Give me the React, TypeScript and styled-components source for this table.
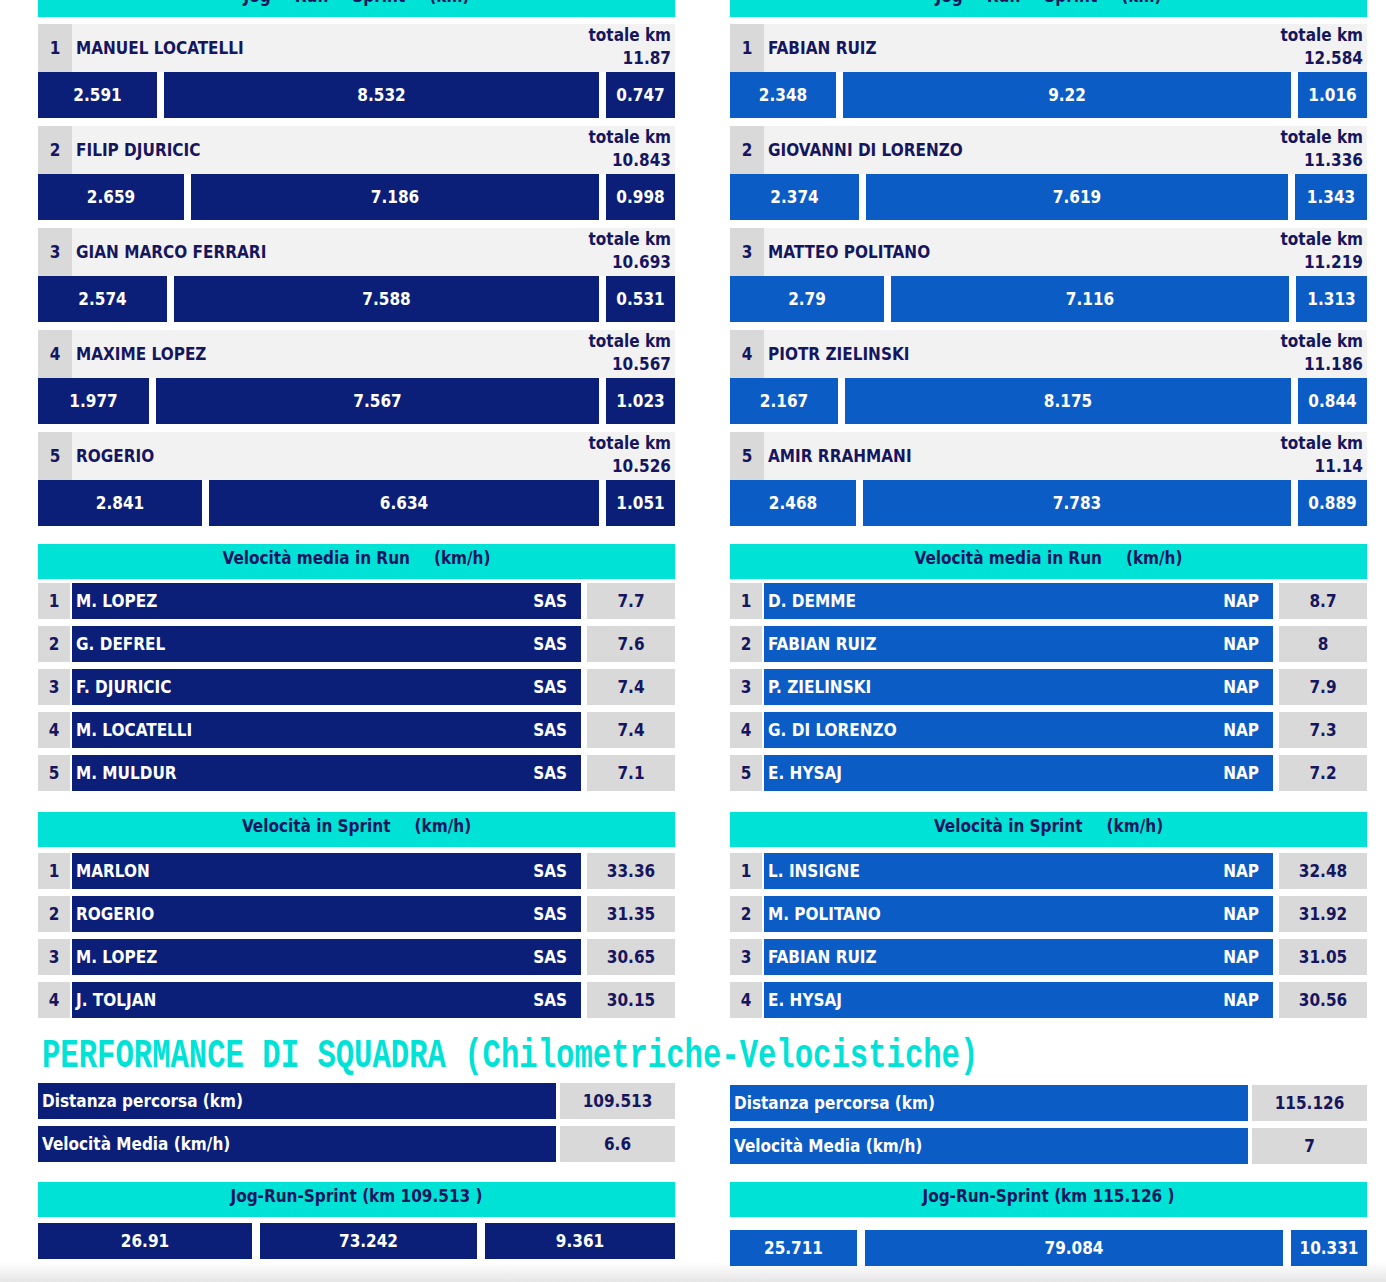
import React from 'react';
import styled, { createGlobalStyle } from 'styled-components';

const GlobalStyle = createGlobalStyle`
  html, body {
    margin: 0;
    padding: 0;
  }
  body {
    width: 1386px;
    height: 1282px;
    overflow: hidden;
    background: linear-gradient(to bottom, #ffffff 0, #ffffff 1262px, #e6e6e6 1282px);
    font-family: 'DejaVu Sans Condensed', 'Liberation Sans Narrow', Roboto, 'Liberation Sans', sans-serif;
    font-weight: 700;
  }
`;

const CYAN = '#00e2d6';
const INK = '#16165e';
const GRAY = '#d9d9d9';
const LIGHT = '#f2f2f2';

type Team = { color: string; code: string };

const Page = styled.div`
  width: 1386px;
  padding-left: 38px;
  box-sizing: border-box;
`;

const Columns = styled.div`
  display: grid;
  grid-template-columns: 637px 637px;
  column-gap: 55px;
  align-items: start;
`;

const Column = styled.div`
  display: flex;
  flex-direction: column;
`;

const Header = styled.div<{ $top?: number }>`
  height: 35px;
  margin-top: ${(p) => p.$top ?? 0}px;
  background: ${CYAN};
  color: ${INK};
  font-size: 17px;
  display: flex;
  justify-content: center;
  gap: 24px;
  padding-top: 3px;
  box-sizing: border-box;
  line-height: 22px;
`;

const PlayerList = styled.div`
  margin-top: 7px;
  display: flex;
  flex-direction: column;
  gap: 8px;
`;

const PlayerBlock = styled.div`
  display: flex;
  flex-direction: column;
`;

const InfoRow = styled.div`
  height: 48px;
  display: flex;
  background: ${LIGHT};
  color: ${INK};
`;

const NumCell = styled.div<{ $w: number }>`
  width: ${(p) => p.$w}px;
  flex: none;
  background: ${GRAY};
  color: ${INK};
  font-size: 17px;
  display: flex;
  align-items: center;
  justify-content: center;
`;

const PlayerName = styled.div`
  flex: 1;
  padding-left: 4px;
  font-size: 17px;
  display: flex;
  align-items: center;
`;

const Total = styled.div`
  text-align: right;
  padding-right: 4px;
  font-size: 17px;
  line-height: 23px;
  padding-top: 0;
`;

const SplitBar = styled.div<{ $h: number; $gap: number }>`
  height: ${(p) => p.$h}px;
  display: flex;
  gap: ${(p) => p.$gap}px;
`;

const Segment = styled.div<{ $color: string }>`
  flex: none;
  background: ${(p) => p.$color};
  color: #ffffff;
  font-size: 17px;
  display: flex;
  align-items: center;
  justify-content: center;
`;

const Section = styled.div<{ $top: number }>`
  margin-top: ${(p) => p.$top}px;
  display: flex;
  flex-direction: column;
`;

const RankList = styled.div<{ $top: number }>`
  margin-top: ${(p) => p.$top}px;
  display: flex;
  flex-direction: column;
  gap: 7px;
`;

const RankRow = styled.div`
  height: 36px;
  display: flex;
`;

const RankName = styled.div<{ $color: string }>`
  flex: 1;
  margin-left: 2px;
  background: ${(p) => p.$color};
  color: #ffffff;
  font-size: 17px;
  display: flex;
  align-items: center;
  justify-content: space-between;
  padding: 0 14px 0 4px;
`;

const ValueCell = styled.div<{ $w: number; $gap: number }>`
  width: ${(p) => p.$w}px;
  margin-left: ${(p) => p.$gap}px;
  flex: none;
  background: ${GRAY};
  color: ${INK};
  font-size: 17px;
  display: flex;
  align-items: center;
  justify-content: center;
`;

const Title = styled.h1`
  margin: 18px 0 0 4px;
  height: 47px;
  font-family: 'Liberation Mono', 'DejaVu Sans Mono', monospace;
  font-weight: 700;
  font-size: 30.6px;
  color: ${CYAN};
  line-height: 30px;
  transform: scaleY(1.35);
  transform-origin: left top;
  white-space: nowrap;
  letter-spacing: 0;
`;

const Summary = styled.div<{ $top: number }>`
  margin-top: ${(p) => p.$top}px;
  display: flex;
  flex-direction: column;
`;

const SummaryRows = styled.div`
  display: flex;
  flex-direction: column;
  gap: 7px;
`;

const SummaryRow = styled.div`
  height: 36px;
  display: flex;
`;

const SummaryLabel = styled.div<{ $color: string }>`
  flex: 1;
  background: ${(p) => p.$color};
  color: #ffffff;
  font-size: 17px;
  display: flex;
  align-items: center;
  padding-left: 4px;
`;

type Player = { name: string; total: string; jog: string; run: string; sprint: string; w1: number; w3: number };
type Rank = { name: string; value: string };

const napoli: Team = { color: '#0c5cc6', code: 'NAP' };
const sassuolo: Team = { color: '#0b1f78', code: 'SAS' };

const sasPlayers: Player[] = [
  { name: 'MANUEL LOCATELLI', total: '11.87', jog: '2.591', run: '8.532', sprint: '0.747', w1: 119, w3: 69 },
  { name: 'FILIP DJURICIC', total: '10.843', jog: '2.659', run: '7.186', sprint: '0.998', w1: 146, w3: 69 },
  { name: 'GIAN MARCO FERRARI', total: '10.693', jog: '2.574', run: '7.588', sprint: '0.531', w1: 129, w3: 69 },
  { name: 'MAXIME LOPEZ', total: '10.567', jog: '1.977', run: '7.567', sprint: '1.023', w1: 111, w3: 69 },
  { name: 'ROGERIO', total: '10.526', jog: '2.841', run: '6.634', sprint: '1.051', w1: 164, w3: 69 },
];

const napPlayers: Player[] = [
  { name: 'FABIAN RUIZ', total: '12.584', jog: '2.348', run: '9.22', sprint: '1.016', w1: 106, w3: 69 },
  { name: 'GIOVANNI DI LORENZO', total: '11.336', jog: '2.374', run: '7.619', sprint: '1.343', w1: 129, w3: 72 },
  { name: 'MATTEO POLITANO', total: '11.219', jog: '2.79', run: '7.116', sprint: '1.313', w1: 154, w3: 71 },
  { name: 'PIOTR ZIELINSKI', total: '11.186', jog: '2.167', run: '8.175', sprint: '0.844', w1: 108, w3: 69 },
  { name: 'AMIR RRAHMANI', total: '11.14', jog: '2.468', run: '7.783', sprint: '0.889', w1: 126, w3: 69 },
];

const sasRun: Rank[] = [
  { name: 'M. LOPEZ', value: '7.7' },
  { name: 'G. DEFREL', value: '7.6' },
  { name: 'F. DJURICIC', value: '7.4' },
  { name: 'M. LOCATELLI', value: '7.4' },
  { name: 'M. MULDUR', value: '7.1' },
];

const napRun: Rank[] = [
  { name: 'D. DEMME', value: '8.7' },
  { name: 'FABIAN RUIZ', value: '8' },
  { name: 'P. ZIELINSKI', value: '7.9' },
  { name: 'G. DI LORENZO', value: '7.3' },
  { name: 'E. HYSAJ', value: '7.2' },
];

const sasSprint: Rank[] = [
  { name: 'MARLON', value: '33.36' },
  { name: 'ROGERIO', value: '31.35' },
  { name: 'M. LOPEZ', value: '30.65' },
  { name: 'J. TOLJAN', value: '30.15' },
];

const napSprint: Rank[] = [
  { name: 'L. INSIGNE', value: '32.48' },
  { name: 'M. POLITANO', value: '31.92' },
  { name: 'FABIAN RUIZ', value: '31.05' },
  { name: 'E. HYSAJ', value: '30.56' },
];

const RankTable: React.FC<{ team: Team; rows: Rank[]; top: number }> = ({ team, rows, top }) => (
  <RankList $top={top}>
    {rows.map((r, i) => (
      <RankRow key={r.name + i}>
        <NumCell $w={32}>{i + 1}</NumCell>
        <RankName $color={team.color}>
          <span>{r.name}</span>
          <span>{team.code}</span>
        </RankName>
        <ValueCell $w={88} $gap={6}>{r.value}</ValueCell>
      </RankRow>
    ))}
  </RankList>
);

const TeamColumn: React.FC<{ team: Team; players: Player[]; run: Rank[]; sprint: Rank[] }> = ({
  team,
  players,
  run,
  sprint,
}) => (
  <Column>
    <Header $top={-18}>
      <span>Jog</span>
      <span>Run</span>
      <span>Sprint</span>
      <span>(km)</span>
    </Header>
    <PlayerList>
      {players.map((p, i) => (
        <PlayerBlock key={p.name}>
          <InfoRow>
            <NumCell $w={34}>{i + 1}</NumCell>
            <PlayerName>{p.name}</PlayerName>
            <Total>
              totale km
              <br />
              {p.total}
            </Total>
          </InfoRow>
          <SplitBar $h={46} $gap={7}>
            <Segment $color={team.color} style={{ width: p.w1 }}>{p.jog}</Segment>
            <Segment $color={team.color} style={{ flex: 1 }}>{p.run}</Segment>
            <Segment $color={team.color} style={{ width: p.w3 }}>{p.sprint}</Segment>
          </SplitBar>
        </PlayerBlock>
      ))}
    </PlayerList>
    <Section $top={18}>
      <Header>
        <span>Velocità media in Run</span>
        <span>(km/h)</span>
      </Header>
      <RankTable team={team} rows={run} top={4} />
    </Section>
    <Section $top={21}>
      <Header>
        <span>Velocità in Sprint</span>
        <span>(km/h)</span>
      </Header>
      <RankTable team={team} rows={sprint} top={6} />
    </Section>
  </Column>
);

type Totals = { dist: string; speed: string; parts: [string, number][] };

const TeamSummary: React.FC<{ team: Team; totals: Totals; top: number; headerGap: number; barGap: number }> = ({
  team,
  totals,
  top,
  headerGap,
  barGap,
}) => (
  <Summary $top={top}>
    <SummaryRows>
      <SummaryRow>
        <SummaryLabel $color={team.color}>Distanza percorsa (km)</SummaryLabel>
        <ValueCell $w={115} $gap={4}>{totals.dist}</ValueCell>
      </SummaryRow>
      <SummaryRow>
        <SummaryLabel $color={team.color}>Velocità Media (km/h)</SummaryLabel>
        <ValueCell $w={115} $gap={4}>{totals.speed}</ValueCell>
      </SummaryRow>
    </SummaryRows>
    <Section $top={headerGap}>
      <Header>
        <span>Jog-Run-Sprint (km {totals.dist} )</span>
      </Header>
    </Section>
    <Section $top={barGap}>
      <SplitBar $h={36} $gap={8}>
        {totals.parts.map(([v, w], i) => (
          <Segment key={i} $color={team.color} style={w ? { width: w } : { flex: 1 }}>
            {v}
          </Segment>
        ))}
      </SplitBar>
    </Section>
  </Summary>
);

export default function App() {
  return (
    <>
      <GlobalStyle />
      <Page>
        <Columns>
          <TeamColumn team={sassuolo} players={sasPlayers} run={sasRun} sprint={sasSprint} />
          <TeamColumn team={napoli} players={napPlayers} run={napRun} sprint={napSprint} />
        </Columns>
        <Title>PERFORMANCE DI SQUADRA (Chilometriche-Velocistiche)</Title>
        <Columns>
          <TeamSummary
            team={sassuolo}
            top={0}
            headerGap={20}
            barGap={6}
            totals={{ dist: '109.513', speed: '6.6', parts: [['26.91', 214], ['73.242', 0], ['9.361', 190]] }}
          />
          <TeamSummary
            team={napoli}
            top={2}
            headerGap={18}
            barGap={13}
            totals={{ dist: '115.126', speed: '7', parts: [['25.711', 127], ['79.084', 0], ['10.331', 76]] }}
          />
        </Columns>
      </Page>
    </>
  );
}
